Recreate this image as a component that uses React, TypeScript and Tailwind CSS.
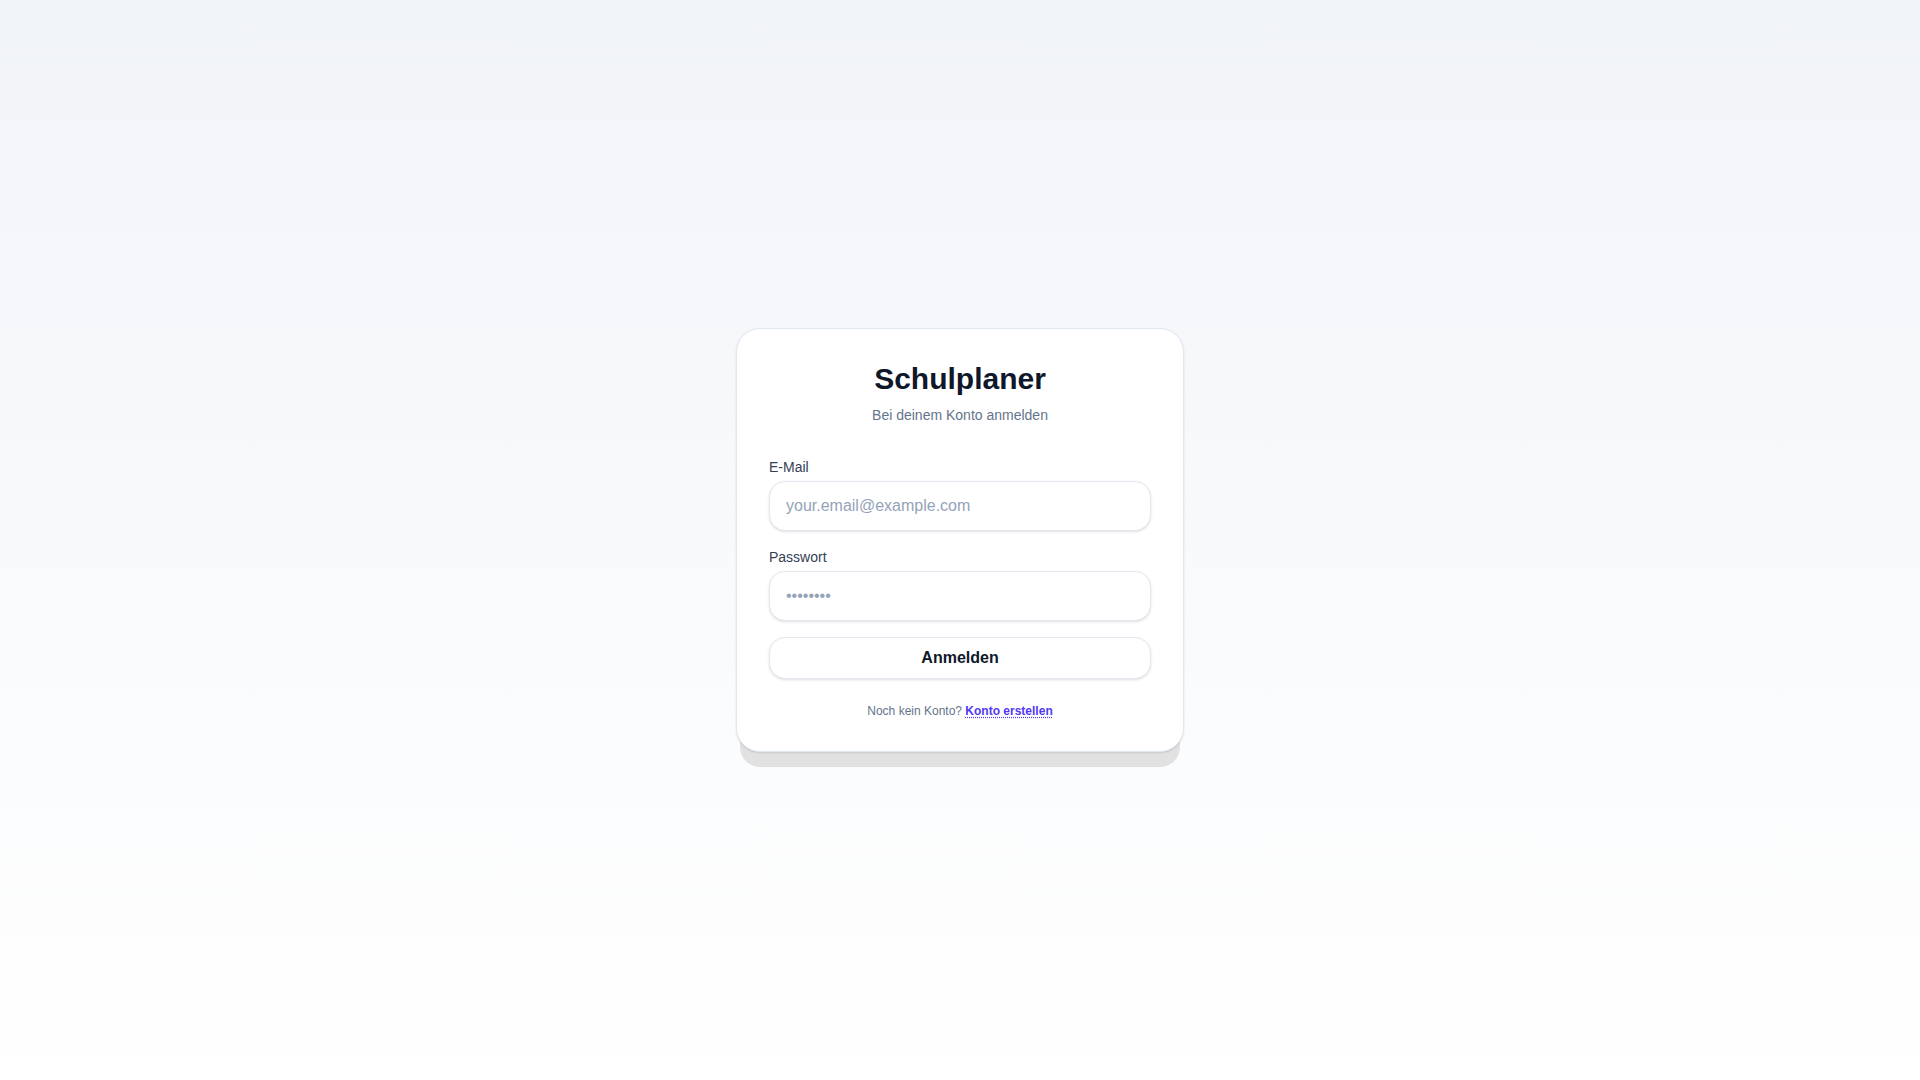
export default function App() {
    return (
        <div
            className="min-h-screen bg-gradient-to-b from-[#f1f4f8] to-white flex items-center justify-center"
            style={{ fontFamily: '"Liberation Sans", Arial, sans-serif' }}
        >
            <div className="w-full max-w-md bg-white border border-[#e2e8f0] rounded-3xl p-8 shadow-[0_1px_2px_rgba(15,23,42,0.12),0_19px_0_-4px_#e1e1e1]">
                <div className="text-center">
                    <h1 className="text-3xl font-bold text-[#0f172a]">Schulplaner</h1>
                    <p className="mt-2 text-sm text-[#64748b]">Bei deinem Konto anmelden</p>
                </div>

                <form className="mt-8" onSubmit={e => e.preventDefault()}>
                    <div>
                        <label className="block text-sm text-[#334155] mb-1">E-Mail</label>
                        <input
                            type="email"
                            placeholder="your.email@example.com"
                            className="block w-full px-4 py-3 text-base text-[#0f172a] placeholder:text-[#94a3b8] bg-white border border-[#e2e8f0] rounded-2xl shadow-sm outline-none"
                        />
                    </div>

                    <div className="mt-4">
                        <label className="block text-sm text-[#334155] mb-1">Passwort</label>
                        <input
                            type="password"
                            placeholder="••••••••"
                            className="block w-full px-4 py-3 text-base text-[#0f172a] placeholder:text-[#94a3b8] bg-white border border-[#e2e8f0] rounded-2xl shadow-sm outline-none"
                        />
                    </div>

                    <button
                        type="submit"
                        className="mt-4 block w-full py-2 text-base font-bold text-[#0f172a] bg-white border border-[#e2e8f0] rounded-2xl shadow-sm"
                    >
                        Anmelden
                    </button>
                </form>

                <p className="mt-6 text-center text-xs text-[#64748b]">
                    Noch kein Konto?{' '}
                    <a href="#" className="font-bold text-[#4f39f6] underline decoration-dotted underline-offset-2">
                        Konto erstellen
                    </a>
                </p>
            </div>
        </div>
    );
}
